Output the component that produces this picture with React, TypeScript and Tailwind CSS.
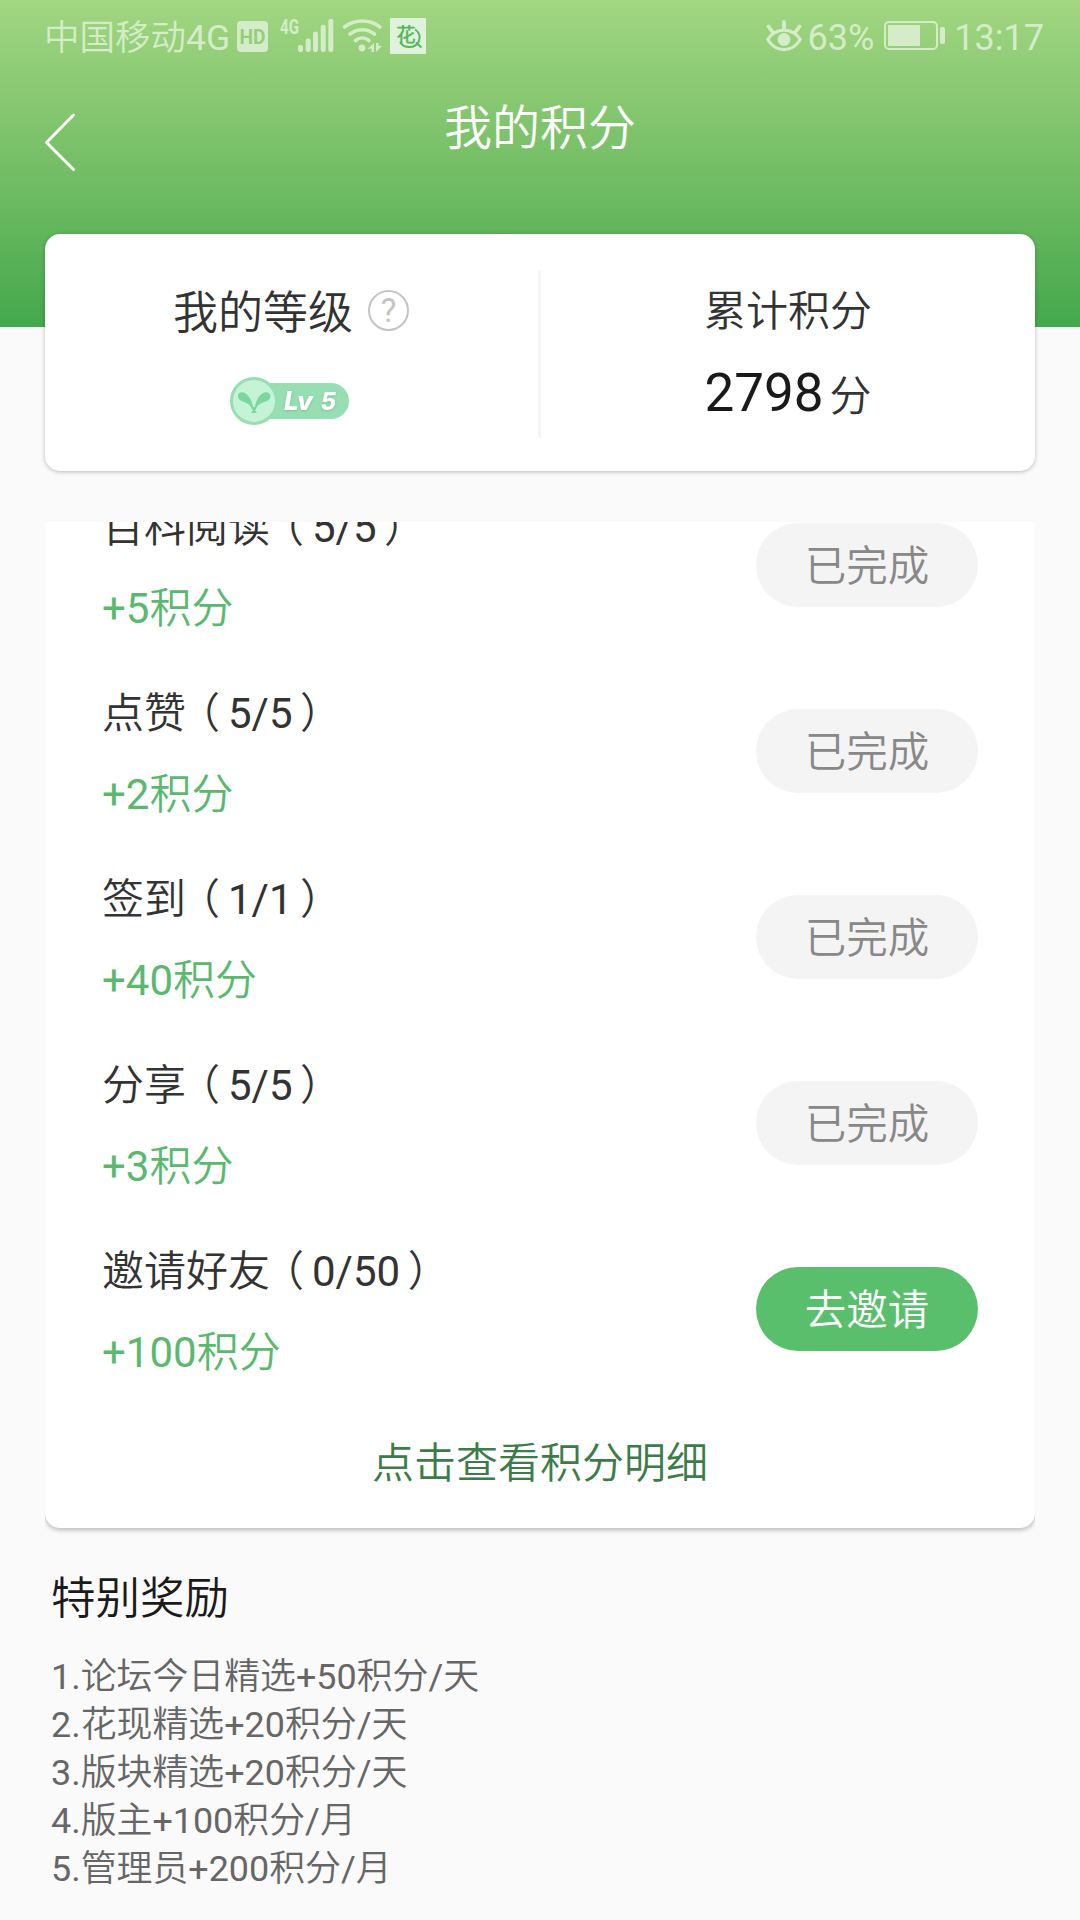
import { clsx } from "clsx"

type Task = {
  name: string
  progress: string
  reward: string
  done: boolean
}

const tasks: Task[] = [
  { name: "百科阅读", progress: "5/5", reward: "+5积分", done: true },
  { name: "点赞", progress: "5/5", reward: "+2积分", done: true },
  { name: "签到", progress: "1/1", reward: "+40积分", done: true },
  { name: "分享", progress: "5/5", reward: "+3积分", done: true },
  { name: "邀请好友", progress: "0/50", reward: "+100积分", done: false },
]

const rewards = [
  "1.论坛今日精选+50积分/天",
  "2.花现精选+20积分/天",
  "3.版块精选+20积分/天",
  "4.版主+100积分/月",
  "5.管理员+200积分/月",
]

export default function App() {
  return (
    <div className="h-[1920px] w-[1080px] overflow-hidden bg-[#fafafa] font-['Roboto','Noto_Sans_CJK_SC_DemiLight','Noto_Sans_CJK_SC',sans-serif] text-[#333]">
      <header className="h-[327px] bg-linear-to-b from-[#a2d681] to-[#42a84c]">
        <StatusBar />
        <TitleBar />
      </header>

      <main className="-mt-[93px] px-[45px]">
        <SummaryCard />

        {/* Scrolled task list, cut off at its top edge */}
        <div className="mt-[51px] overflow-hidden pb-3">
          <section className="-mt-[50px] h-[1056px] rounded-[15px] bg-white px-[57px] shadow-[0_2px_5px_rgba(0,0,0,0.28)]">
            {tasks.map((task) => (
              <TaskRow key={task.name} task={task} />
            ))}
            <a className="block pt-8 text-center text-[42px] leading-[60px] text-[#3c7c4a]">
              点击查看积分明细
            </a>
          </section>
        </div>

        <SpecialRewards />
      </main>
    </div>
  )
}

function StatusBar() {
  return (
    <div className="flex h-[72px] items-center justify-between pr-[36px] pl-[44px] text-[36px] text-[#d5ecc9]">
      <div className="flex items-center">
        <span className="w-[187px] pt-[4px] text-[35.5px] leading-[72px] whitespace-nowrap">
          中国移动4G
        </span>
        <StatusIcons />
      </div>
      <div className="flex items-center">
        <EyeIcon />
        <span className="ml-[6px] pt-[4px]">63%</span>
        <BatteryIcon />
        <span className="ml-[8px] pt-[4px]">13:17</span>
      </div>
    </div>
  )
}

/* HD badge, signal strength, wifi and the app notification */
function StatusIcons() {
  return (
    <svg
      className="ml-[5px]"
      width="192"
      height="72"
      viewBox="236 0 192 72"
      fill="currentColor"
    >
      <rect x="237" y="21" width="31" height="31" rx="4" />
      <text
        x="252.5"
        y="44"
        textAnchor="middle"
        textLength="26"
        lengthAdjust="spacingAndGlyphs"
        className="fill-[#93cf7b] text-[21px] font-bold"
      >
        HD
      </text>
      <text
        x="280"
        y="34"
        textLength="19"
        lengthAdjust="spacingAndGlyphs"
        className="text-[20px] font-bold"
      >
        4G
      </text>
      <rect x="298" y="45" width="5" height="7" rx="2.2" />
      <rect x="305.7" y="38.5" width="5" height="13.5" rx="2.2" />
      <rect x="313" y="31.5" width="5" height="20.5" rx="2.2" />
      <rect x="320.7" y="24.7" width="5" height="27.3" rx="2.2" />
      <rect x="328.3" y="19" width="5" height="33" rx="2.2" />
      <g fill="none" stroke="currentColor" strokeWidth="3.6" strokeLinecap="round">
        <path d="M344.5 27C354.5 19 370 19 380 27" />
        <path d="M350 34C357 28.3 367.5 28.3 374.5 34" />
        <path d="M355.5 40.5C359.5 37.2 365 37.2 369 40.5" />
      </g>
      <circle cx="362" cy="48" r="3.4" />
      <path d="M374 43V52H371.5V48.8H367.5ZM376 52V43H378.5V46H382Z" />
      <rect x="390" y="18" width="36" height="36" className="fill-[#e1f2dc]" />
      <text
        x="406"
        y="42"
        textAnchor="middle"
        className="fill-[#55b95c] text-[19px] font-bold"
      >
        花
      </text>
      <path
        d="M400 42C404 49 415 48.5 418.5 42C421 37 419.5 32 415 29.5M416 42.5L421.5 47.5"
        fill="none"
        stroke="#55b95c"
        strokeWidth="2"
      />
    </svg>
  )
}

function EyeIcon() {
  return (
    <svg width="36" height="32" viewBox="0 0 36 32" fill="none" stroke="currentColor">
      <path
        d="M1.7 19.5C10 7 26 7 34.3 19.5C26 33 10 33 1.7 19.5Z"
        strokeWidth="3.2"
        strokeLinejoin="round"
      />
      <circle cx="18" cy="19.5" r="6.4" fill="currentColor" stroke="none" />
      <path
        d="M18 2V8M2.5 6.5L6.5 12M33.5 6.5L29.5 12"
        strokeWidth="3.8"
        strokeLinecap="round"
      />
    </svg>
  )
}

function BatteryIcon() {
  return (
    <svg className="ml-[10px]" width="62" height="30" viewBox="0 0 62 30">
      <rect
        x="1"
        y="1"
        width="52"
        height="27"
        rx="4"
        fill="none"
        stroke="currentColor"
        strokeWidth="2"
      />
      <rect x="4" y="4" width="32" height="21" rx="1" fill="currentColor" />
      <rect x="56" y="6" width="5" height="17" rx="2" fill="currentColor" />
    </svg>
  )
}

function TitleBar() {
  return (
    <div className="grid grid-cols-3 px-[44px] pt-[20px]">
      <svg
        className="mt-[21px]"
        width="32"
        height="60"
        viewBox="0 0 32 60"
        fill="none"
        stroke="white"
        strokeWidth="3"
        strokeLinecap="round"
        strokeLinejoin="round"
      >
        <path d="M29.5 2L2.5 29.5L29.5 56.5" />
      </svg>
      <h1 className="pt-[2px] text-center text-[48px] leading-[70px] text-white">
        我的积分
      </h1>
    </div>
  )
}

function SummaryCard() {
  return (
    <section className="flex h-[237px] rounded-[15px] bg-white pt-9 shadow-[0_1px_4px_rgba(0,0,0,0.26)]">
      <div className="flex w-[493px] flex-col items-center">
        <div className="mt-[8px] mr-px flex h-[64px] items-center gap-[15px]">
          <h2 className="pt-[7px] text-[45px] leading-[60px]">我的等级</h2>
          <span className="flex size-[41px] items-center justify-center rounded-full border-2 border-[#c4c4c4] text-[33px] leading-none text-[#c4c4c4]">
            ?
          </span>
        </div>
        <LevelBadge />
      </div>
      <div className="h-[168px] w-[3px] bg-[#f6f6f6]" />
      <div className="flex flex-1 flex-col items-center">
        <h2 className="mt-[10px] text-[42px] leading-[64px]">累计积分</h2>
        <p className="mt-[17px] flex items-baseline leading-[64px]">
          <span className="text-[53px] text-[#1a1a1a]">2798</span>
          <span className="ml-[6px] text-[42px]">分</span>
        </p>
      </div>
    </section>
  )
}

function LevelBadge() {
  return (
    <svg className="mt-[35px] mr-[4px]" width="119" height="48" viewBox="0 0 119 48">
      <rect x="20" y="6" width="99" height="36" rx="18" fill="#97deb3" />
      <circle cx="24" cy="24" r="22.5" fill="#c4f3d6" stroke="#97deb3" strokeWidth="3" />
      <g fill="#7ad79e">
        <path d="M23.3 33C23.3 26 19 16 12.5 15.2C7.5 14.8 6.5 20.5 10 23C14 26 19.500 25 22.500 33Z" />
        <path d="M24.700 33C24.700 26 29 16 35.500 15.200C40.500 14.800 42 20 38.500 23C34.500 26 28 25 25.500 33Z" />
        <path d="M21 36L23 33.500V30H25V33.500L27 36Z" />
      </g>
      <text
        x="54"
        y="33"
        className="fill-white font-['Inter'] text-[26px] font-extrabold italic drop-shadow-[0_1px_1px_rgba(60,140,90,0.35)]"
      >
        Lv
      </text>
      <text
        x="90.5"
        y="33"
        className="fill-white font-['Inter'] text-[24px] font-extrabold italic drop-shadow-[0_1px_1px_rgba(60,140,90,0.35)]"
      >
        5
      </text>
    </svg>
  )
}

/* Half-width bracket glyph set in a full-width cell */
function Bracket({ children, className }: { children: string; className: string }) {
  return (
    <span
      className={clsx(
        "inline-block w-[42px] text-center [font-feature-settings:'halt']",
        className
      )}
    >
      {children}
    </span>
  )
}

function TaskRow({ task }: { task: Task }) {
  return (
    <div className="flex h-[186px] items-center justify-between">
      <div className="pt-[7px] text-[42px]">
        <h3 className="mb-[21px] leading-[60px]">
          {task.name}
          <Bracket className="pl-[5px]">（</Bracket>
          {task.progress}
          <Bracket className="pr-[6px]">）</Bracket>
        </h3>
        <p className="leading-[60px] text-[#5ab96e]">{task.reward}</p>
      </div>
      <button
        className={clsx(
          "h-[84px] w-[222px] rounded-full pt-[3px] text-[41.5px] leading-[80px]",
          task.done ? "bg-[#f4f4f4] text-[#888]" : "bg-[#5abf6d] text-white"
        )}
      >
        {task.done ? "已完成" : "去邀请"}
      </button>
    </div>
  )
}

function SpecialRewards() {
  return (
    <section className="px-[6px] pt-[29px]">
      <h2 className="text-[44.5px] leading-[60px] text-[#1a1a1a]">特别奖励</h2>
      <ul className="mt-[24px] text-[35.9px] leading-[48px] text-[#666]">
        {rewards.map((item) => (
          <li key={item}>{item}</li>
        ))}
      </ul>
    </section>
  )
}
